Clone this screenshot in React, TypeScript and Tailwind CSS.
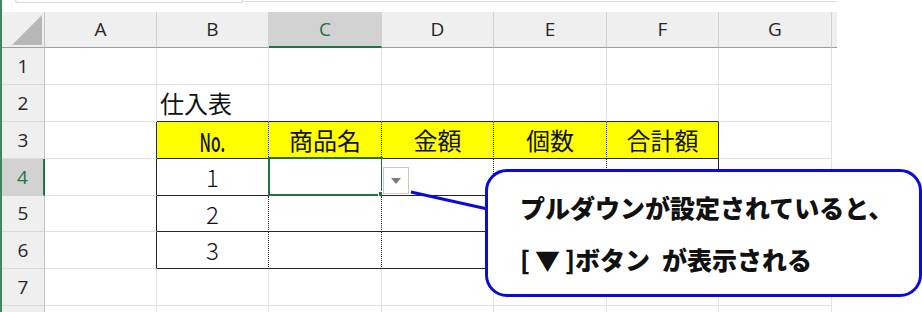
import React from 'react';

const COLS = ['A', 'B', 'C', 'D', 'E', 'F', 'G'];
const COL_W = ['w-[112px]', 'w-[112px]', 'w-[113px]', 'w-[112px]', 'w-[113px]', 'w-[112px]', 'w-[113px]'];
const ROW_H = ['h-[37px]', 'h-[37px]', 'h-[37px]', 'h-[37px]', 'h-[36px]', 'h-[37px]', 'h-[37px]', 'h-[8px]'];

const HEADERS = ['No.', '商品名', '金額', '個数', '合計額'];

function cellBorder(row: number, col: number) {
    // table B3:F6 -> rows 3..6, cols 1..5
    if (row === 2 && col >= 1 && col <= 5) return 'border-r border-r-[#e1e1e1] border-b border-b-[#262626]';
    if (row >= 3 && row <= 6) {
        if (col === 0) return 'border-r border-r-[#262626] border-b border-b-[#e1e1e1]';
        if (col >= 1 && col <= 4) return 'border-r border-r-[#262626] [border-right-style:dotted] border-b border-b-[#262626]';
        if (col === 5) return 'border-r border-r-[#262626] border-b border-b-[#262626]';
    }
    return 'border-r border-r-[#e1e1e1] border-b border-b-[#e1e1e1]';
}

function cellText(row: number, col: number) {
    if (row === 2 && col === 1) return <span className="pl-[3px]">仕入表</span>;
    if (row === 3 && col >= 1 && col <= 5) {
        if (col === 1) return <span className="inline-block scale-x-[0.6] text-[26px] font-medium">No.</span>;
        return HEADERS[col - 1];
    }
    if (row >= 4 && row <= 6 && col === 1) return <span className="font-light">{row - 3}</span>;
    return null;
}

function DropdownButton() {
    return (
        <div className="absolute left-[114px] top-[8px] w-[26px] h-[27px] bg-white border border-[#c9c9c9] flex items-center justify-center z-10">
            <svg width="10" height="6" viewBox="0 0 10 6">
                <polygon points="0,0 10,0 5,6" fill="#7a7a7a" />
            </svg>
        </div>
    );
}

export default function App() {
    return (
        <div className="relative w-[922px] h-[312px] overflow-hidden bg-white border-l-2 border-l-[#3b8a5e] font-['Noto_Sans_CJK_JP',sans-serif]">
            {/* formula bar edge */}
            <div className="flex items-start h-[12px] bg-white">
                <div className="ml-[13px] w-[228px] h-[3px] border-x border-b border-[#d6d6d6] rounded-b-[6px]" />
                <div className="mt-[1px] w-[594px] border-t border-[#dcdcdc]" />
            </div>

            {/* column headers */}
            <div className="flex h-[36px] font-['Open_Sans',sans-serif] text-[19px] text-[#262626]">
                <div className="w-[43px] flex items-end justify-end pr-[2px] pb-[2px] bg-[#efefef] border-r border-r-[#c4c4c4] border-b border-b-[#9f9f9f]">
                    <svg width="30" height="30" viewBox="0 0 30 30">
                        <polygon points="30,0 30,30 0,30" fill="#b7b7b7" />
                    </svg>
                </div>
                {COLS.map((c, i) =>
                    c === 'C' ? (
                        <div key={c} className={`${COL_W[i]} flex items-center justify-center bg-[#d2d2d2] text-[#217346] border-r border-r-[#d2d2d2] border-b-2 border-b-[#217346]`}>
                            {c}
                        </div>
                    ) : (
                        <div key={c} className={`${COL_W[i]} flex items-center justify-center bg-[#efefef] border-r border-r-[#d0d0d0] border-b border-b-[#9f9f9f]`}>
                            {c}
                        </div>
                    )
                )}
                <div className="w-[5px] bg-[#efefef] border-b border-b-[#9f9f9f]" />
            </div>

            {/* rows */}
            {ROW_H.map((h, r) => {
                const row = r + 1;
                const selected = row === 4;
                return (
                    <div key={row} className={`flex ${h}`}>
                        <div
                            className={
                                selected
                                    ? 'w-[43px] flex items-center justify-center bg-[#d2d2d2] text-[#217346] border-r-2 border-r-[#217346] border-b border-b-[#d2d2d2] font-[\'Open_Sans\',sans-serif] text-[19px]'
                                    : 'w-[43px] flex items-center justify-center bg-[#efefef] text-[#262626] border-r border-r-[#c4c4c4] border-b border-b-[#dadada] font-[\'Open_Sans\',sans-serif] text-[19px]'
                            }
                        >
                            {row <= 7 ? row : ''}
                        </div>
                        {COLS.map((c, col) => {
                            const yellow = row === 3 && col >= 1 && col <= 5;
                            const isC4 = row === 4 && col === 2;
                            return (
                                <div
                                    key={c}
                                    className={`${COL_W[col]} relative flex items-center ${row === 2 ? 'justify-start' : 'justify-center'} text-[24px] text-[#111] ${yellow ? 'bg-[#ffff00]' : 'bg-white'} ${cellBorder(row, col)}`}
                                >
                                    {cellText(row, col)}
                                    {isC4 && (
                                        <>
                                            <div className="absolute left-[-1px] top-[-2px] w-[115px] h-[39px] border-2 border-[#217346]" />
                                            <div className="absolute left-[109px] top-[32px] w-[7px] h-[7px] bg-[#217346] border border-white" />
                                            <DropdownButton />
                                        </>
                                    )}
                                </div>
                            );
                        })}
                    </div>
                );
            })}

            {/* connector */}
            <svg className="absolute left-0 top-0 pointer-events-none" width="922" height="312">
                <line x1="409" y1="192" x2="490" y2="210" stroke="#0a0ae0" strokeWidth="3" />
            </svg>

            {/* callout */}
            <div className="absolute left-[483px] top-[169px] w-[437px] h-[128px] bg-white border-[3px] border-[#0a0ae0] rounded-[22px] pl-[32px] pt-[9px] text-[25px] font-black leading-[52px] text-[#111]">
                <div>プルダウンが設定されていると、</div>
                <div>
                    [<span className="mx-[5px]">▼</span>]ボタン<span className="inline-block w-[12px]" />が表示される
                </div>
            </div>
        </div>
    );
}
